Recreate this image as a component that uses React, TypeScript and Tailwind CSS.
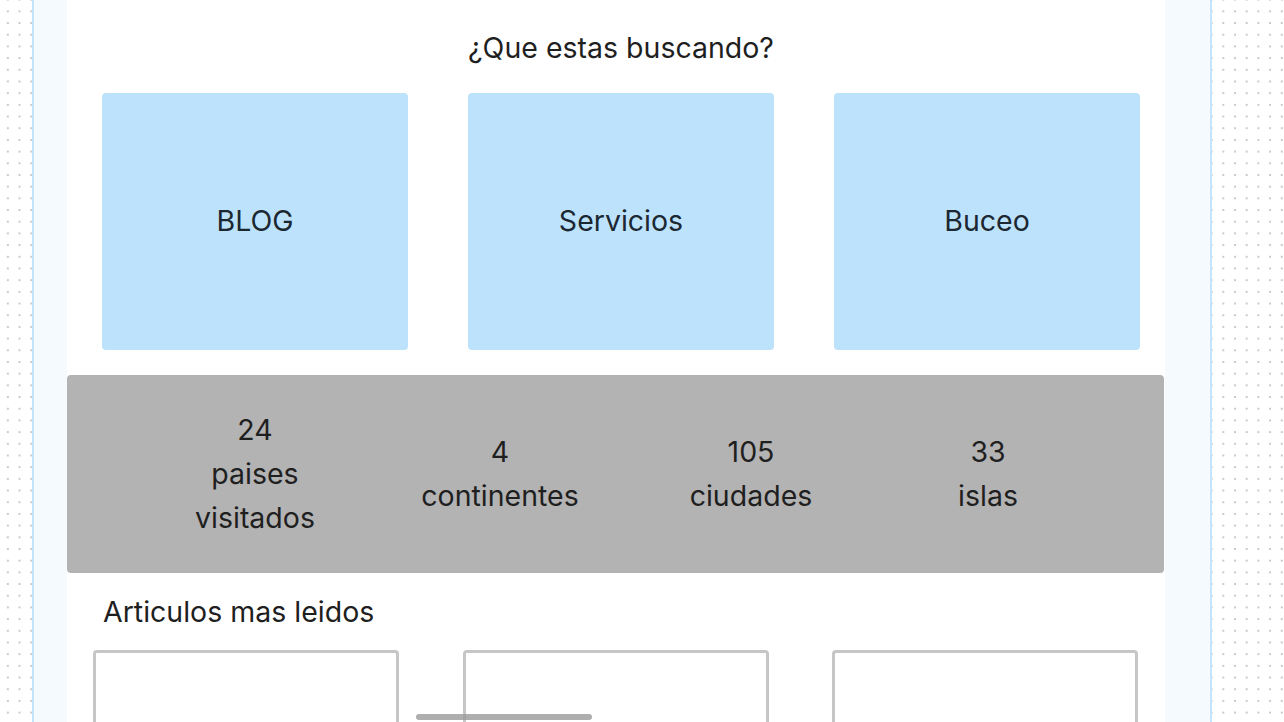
export default function App() {
  const stats = [
    { n: "24", label: "paises visitados", cls: "ml-[108px] w-[160px]" },
    { n: "4", label: "continentes", cls: "ml-[65px] w-[200px]" },
    { n: "105", label: "ciudades", cls: "ml-[71px] w-[160px]" },
    { n: "33", label: "islas", cls: "ml-[77px] w-[160px]" },
  ]

  return (
    <div
      className="relative h-[722px] w-full overflow-hidden bg-white bg-[radial-gradient(circle,#c9c9c9_0.8px,transparent_1px)] bg-[size:11.7px_11.7px] bg-[position:2px_5.5px] font-['Inter',sans-serif] text-[#1f1f1f]"
    >
      <div className="ml-[32px] flex h-full w-[1180px] border-x-2 border-[#c3e5fb] bg-[#f5faff] pl-[33px] pr-[44px]">
        <div className="flex h-full w-[1098px] flex-col bg-white">
          <h1 className="shrink-0 pt-[30px] pl-[10px] text-center text-[28.5px] leading-[36px]">¿Que estas buscando?</h1>

          <div className="mt-[27px] flex shrink-0 gap-[60px] pl-[35px]">
            {["BLOG", "Servicios", "Buceo"].map((t) => (
              <div
                key={t}
                className="flex h-[257px] w-[306px] items-center justify-center rounded-[4px] bg-[#bde3fc] text-[28.5px] text-[#1b2731]"
              >
                {t}
              </div>
            ))}
          </div>

          <div className="mt-[25px] flex h-[198px] w-[1097px] shrink-0 items-center rounded-[4px] bg-[#b3b3b3]">
            {stats.map((s) => (
              <div key={s.n} className={`${s.cls} text-center text-[28.5px] leading-[44px]`}>
                <div>{s.n}</div>
                <div>{s.label}</div>
              </div>
            ))}
          </div>

          <h2 className="mt-[21px] shrink-0 pl-[36px] text-[28.5px] leading-[36px]">Articulos mas leidos</h2>

          <div className="mt-[20px] flex shrink-0 pl-[26px]">
            <div className="h-[200px] w-[306px] rounded-[4px] border-[3px] border-[#c6c6c6]" />
            <div className="ml-[64px] h-[200px] w-[306px] rounded-[4px] border-[3px] border-[#c6c6c6]" />
            <div className="ml-[63px] h-[200px] w-[306px] rounded-[4px] border-[3px] border-[#c6c6c6]" />
          </div>
        </div>
      </div>

      <div className="absolute left-[416px] top-[714px] h-[6px] w-[176px] rounded-full bg-[#9a9a9a]/80" />
    </div>
  )
}
